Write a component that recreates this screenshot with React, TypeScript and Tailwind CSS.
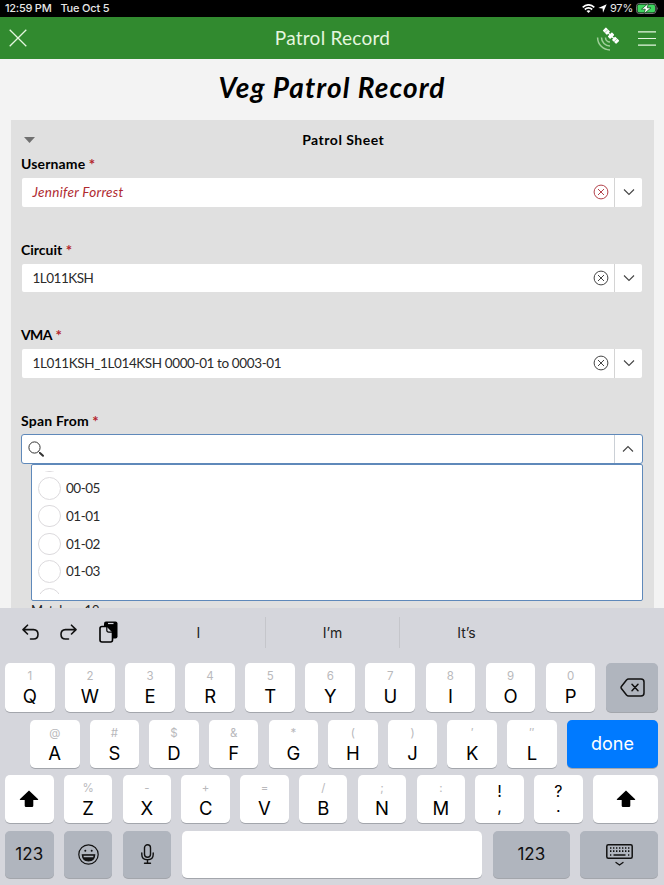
import React from "react";

const form = "font-['Lato',sans-serif]";

function ClearIcon({ color }: { color: string }) {
  return (
    <svg width="16" height="16" viewBox="0 0 16 16" fill="none" stroke={color} strokeWidth="1">
      <circle cx="8" cy="8" r="6.9" />
      <path d="M5 5l6 6M11 5l-6 6" />
    </svg>
  );
}

function Chevron({ up = false }: { up?: boolean }) {
  return (
    <svg width="12" height="8" viewBox="0 0 12 8" fill="none" stroke="#444" strokeWidth="1.1">
      <path d={up ? "M1 6.5L6 1.5L11 6.5" : "M1 1.5L6 6.5L11 1.5"} />
    </svg>
  );
}

function Label({ text, track }: { text: string; track: string }) {
  return (
    <div className="flex h-[20px] items-center pl-[10px] text-[14px] font-bold leading-[20px] text-black">
      <span className={track}>{text}</span>
      <span className="ml-[3.5px] text-[15px] font-bold text-[#b3242b]">*</span>
    </div>
  );
}

function Field({ value, track, invalid = false }: { value: string; track: string; invalid?: boolean }) {
  return (
    <div className="ml-[10.5px] mr-[11.5px] flex h-[28.5px] overflow-hidden rounded-[2px] bg-white">
      <div className="flex flex-1 items-center justify-between pl-[11px] pr-[5px]">
        <span className={`text-[13.5px] ${track} ${invalid ? "italic text-[#b02a30]" : "text-[#2b2b2b]"}`}>{value}</span>
        <ClearIcon color={invalid ? "#b3424a" : "#444"} />
      </div>
      <div className="w-px bg-[#d4d4d4]" />
      <div className="flex w-[27px] items-center justify-center">
        <Chevron />
      </div>
    </div>
  );
}

function Option({ text }: { text: string }) {
  return (
    <div className="flex h-[27.7px] shrink-0 items-center">
      <div className="h-[22.5px] w-[22.5px] rounded-full border border-[#dcdadd]" />
      <span className="ml-[5.5px] text-[13.5px] tracking-[-0.5px] text-[#2b2b2b]">{text}</span>
    </div>
  );
}

const keyBase = "flex shrink-0 rounded-[5px] shadow-[0_1px_0_#a3a6ac]";

function Key({ main, alt, size }: { main: string; alt: string; size: string }) {
  return (
    <div className={`${keyBase} ${size} flex-col items-center bg-white`}>
      <span className="mt-[5px] h-[16px] text-[11.5px] leading-[16px] text-[#b9b9bc]">{alt}</span>
      <span className="mt-[1px] text-[18.5px] leading-[23px] text-black">{main}</span>
    </div>
  );
}

function PunctKey({ top, bottom }: { top: string; bottom: string }) {
  return (
    <div className={`${keyBase} h-[47.5px] w-[48.5px] flex-col items-center bg-white text-[16px] text-black`}>
      <span className="mt-[6px] h-[20px] leading-[20px]">{top}</span>
      <span className="-mt-[2px] h-[14px] leading-[14px]">{bottom}</span>
    </div>
  );
}

function ShiftIcon() {
  return (
    <svg width="20" height="18" viewBox="0 0 20 18" fill="#000">
      <path d="M10 .4L19.2 9.2Q19.5 10 18.6 10H14.3V15.7Q14.3 17 13 17H7Q5.7 17 5.7 15.7V10H1.4Q.5 10 .8 9.2Z" />
    </svg>
  );
}

const row1 = [["Q", "1"], ["W", "2"], ["E", "3"], ["R", "4"], ["T", "5"], ["Y", "6"], ["U", "7"], ["I", "8"], ["O", "9"], ["P", "0"]];
const row2 = [["A", "@"], ["S", "#"], ["D", "$"], ["F", "&"], ["G", "*"], ["H", "("], ["J", ")"], ["K", "′"], ["L", "″"]];
const row3 = [["Z", "%"], ["X", "-"], ["C", "+"], ["V", "="], ["B", "/"], ["N", ";"], ["M", ":"]];

export default function App() {
  return (
    <div className={`flex h-[885px] w-[664px] flex-col overflow-hidden bg-[#f3f3f3] ${form}`}>
      <div className="flex h-[17px] shrink-0 items-center justify-between bg-black pl-[5px] pr-[5px] font-['Inter',sans-serif] text-[11px] font-medium text-[#e6e6e6]">
        <div className="flex">
          <span className="tracking-[-0.25px]">12:59 PM</span>
          <span className="ml-[9px] tracking-[-0.2px]">Tue Oct 5</span>
        </div>
        <div className="flex items-center">
          <svg width="13" height="9" viewBox="0 0 13 9" fill="none" stroke="#fff" strokeWidth="1.7">
            <path d="M.7 3.3Q6.5-1.600 12.300 3.300M2.800 5.500Q6.500 2.300 10.200 5.500" />
            <path d="M6.500 9L4.500 7Q6.500 5.500 8.500 7Z" fill="#fff" stroke="none" />
          </svg>
          <svg className="ml-[3px]" width="9" height="9" viewBox="0 0 9 9" fill="#fff">
            <path d="M8.700.3L5 8.700L4.600 4.500L.3 4Z" />
          </svg>
          <span className="ml-[3px] text-[11px] font-normal tracking-[-0.2px]">97%</span>
          <svg className="ml-[3px]" width="23" height="11" viewBox="0 0 23 11">
            <rect x=".5" y=".5" width="19.500" height="10" rx="2.800" fill="none" stroke="#777" />
            <rect x="1.500" y="1.500" width="17.500" height="8" rx="1.800" fill="#3fd45f" />
            <path d="M21.200 3.800Q22.800 5.500 21.200 7.200Z" fill="#777" />
            <path d="M12.500.2L5.500 6.200H9.300L8 10.800L15 4.800H11.200Z" fill="#fff" stroke="#123c1a" strokeWidth=".7" />
          </svg>
        </div>
      </div>

      <div className="flex h-[42px] shrink-0 items-center justify-between bg-[#318a2f] pl-[9px] pr-[8px] text-[#e4f6df]">
        <div className="flex w-[60px]">
          <svg width="18" height="18" viewBox="0 0 18 18" fill="none" stroke="#e4f6df" strokeWidth="1.300">
            <path d="M.7 .7L17.300 17.300M17.300 .7L.7 17.300" />
          </svg>
        </div>
        <span className="text-[19px] tracking-[0.25px]">Patrol Record</span>
        <div className="flex w-[60px] items-center justify-end">
          <svg className="overflow-visible" width="23" height="23" viewBox="0 0 23 23" fill="none">
            <g transform="translate(15 8.700) rotate(45)" fill="#fff">
              <rect x="-9.500" y="-2.300" width="6" height="4.600" rx=".6" />
              <rect x="3.500" y="-2.300" width="6" height="4.600" rx=".6" />
              <rect x="-4" y="-.6" width="8" height="1.200" />
              <rect x="-1.800" y="-3" width="3.600" height="6" rx=".8" />
              <path d="M-6.500-2.300V2.300M6.500-2.300V2.300" stroke="#318a2f" strokeWidth=".4" />
            </g>
            <g stroke="#9fcf99" strokeWidth="1.500">
              <path d="M9.500 10.500A4.500 4.500 0 0 0 14 15M5.500 10.500A8.500 8.500 0 0 0 14 19M1.600 10.500A12.400 12.400 0 0 0 14 22.900" />
            </g>
          </svg>
          <svg className="ml-[19px]" width="19" height="17" viewBox="0 0 19 17" stroke="#e4f6df" strokeWidth="1.300">
            <path d="M0 1.500H19M0 8.500H19M0 15.500H19" />
          </svg>
        </div>
      </div>

      <div className="flex h-[61px] shrink-0 items-center justify-center pb-[5px] text-[28px] font-bold italic text-black">
        <span className="tracking-[1.1px]">Veg Patrol Record</span>
      </div>

      <div className="ml-[11px] mr-[10.500px] flex h-[488px] shrink-0 flex-col overflow-hidden bg-[#e0e0e0]">
        <div className="mt-[10px] flex h-[20px] shrink-0 items-center pl-[13px] pr-[2px]">
          <svg width="11" height="6" viewBox="0 0 11 6" fill="#707070">
            <path d="M0 0H11L5.500 6Z" />
          </svg>
          <span className="flex-1 pb-[2px] text-center text-[14px] font-bold tracking-[0.5px]">Patrol Sheet</span>
        </div>
        <div className="mt-[4px] h-[85.500px] shrink-0">
          <Label text="Username" track="tracking-[0.15px]" />
          <div className="h-[4px]" />
          <Field value="Jennifer Forrest" track="tracking-[0.3px]" invalid />
        </div>
        <div className="h-[85.500px] shrink-0">
          <Label text="Circuit" track="tracking-[0px]" />
          <div className="h-[4px]" />
          <Field value="1L011KSH" track="tracking-[-0.5px]" />
        </div>
        <div className="h-[85.500px] shrink-0">
          <Label text="VMA" track="tracking-[-0.6px]" />
          <div className="h-[4px]" />
          <Field value="1L011KSH_1L014KSH 0000-01 to 0003-01" track="tracking-[-0.39px]" />
        </div>
        <Label text="Span From" track="tracking-[0.2px]" />
        <div className="ml-[10px] mr-[11px] mt-[3.500px] flex h-[30px] shrink-0 rounded-[3px] border border-[#5f89ba] bg-white">
          <div className="flex flex-1 items-center pl-[6px]">
            <svg width="17" height="17" viewBox="0 0 17 17" fill="none" stroke="#333">
              <circle cx="6.500" cy="6.500" r="5.600" strokeWidth="1" />
              <path d="M10.500 10.500L12.500 12.500" strokeWidth="1" />
              <path d="M12 12L15 14.800" strokeWidth="2" strokeLinecap="round" />
            </svg>
          </div>
          <div className="w-px bg-[#cbd0d6]" />
          <div className="flex w-[27px] items-center justify-center">
            <Chevron up />
          </div>
        </div>
        <div className="ml-[20px] mr-[10.500px] h-[137px] shrink-0 rounded-[2px] border border-[#5f89ba] bg-white pl-[6px] pt-[6px]">
          <div className="flex h-[123px] flex-col overflow-hidden">
            <div className="-mt-[24px] h-[27.700px] shrink-0">
              <Option text="" />
            </div>
            <Option text="00-05" />
            <Option text="01-01" />
            <Option text="01-02" />
            <Option text="01-03" />
            <Option text="" />
          </div>
        </div>
        <div className="ml-[20px] mt-[1px] shrink-0 text-[13px] leading-[16px] tracking-[-0.2px] text-[#222]">Matches: 19</div>
      </div>

      <div className="flex h-[277px] shrink-0 flex-col bg-[#d5d6dc] font-['Inter',sans-serif]">
        <div className="flex h-[55px] shrink-0 items-center pb-[6px] text-[14px] text-[#222]">
          <div className="flex w-[132px] items-center pl-[22px]">
            <svg width="17" height="17" viewBox="0 0 17 17" fill="none" stroke="#111" strokeWidth="1.600" strokeLinecap="round" strokeLinejoin="round">
              <path d="M5.500 1.200L1 5.600L5.500 10M1.300 5.600H11.500Q16 5.800 16 10.300Q16 15 11.500 15H8.500" />
            </svg>
            <svg className="ml-[21px]" width="17" height="17" viewBox="0 0 17 17" fill="none" stroke="#111" strokeWidth="1.600" strokeLinecap="round" strokeLinejoin="round">
              <path d="M11.500 1.200L16 5.600L11.500 10M15.700 5.600H5.500Q1 5.800 1 10.300Q1 15 5.500 15H8.500" />
            </svg>
            <svg className="-mt-[2px] ml-[22px]" width="19" height="22" viewBox="0 0 19 22">
              <rect x="5" y=".5" width="13.500" height="17" rx="2" fill="#000" />
              <path d="M9 2.500H14.500" stroke="#d5d6dc" strokeWidth="1.200" />
              <path d="M3 5.500H8.500L13.500 10.500V19Q13.500 21 11.500 21H3Q1 21 1 19V7.500Q1 5.500 3 5.500Z" fill="#d5d6dc" stroke="#000" strokeWidth="1.600" />
              <path d="M7.800 6V9.300Q7.800 11.100 9.800 11.100H13.500" fill="none" stroke="#000" strokeWidth="1.200" />
            </svg>
          </div>
          <span className="w-[133px] text-center">I</span>
          <div className="h-[31px] w-px bg-[#c5c6cb]" />
          <span className="w-[133px] text-center">I’m</span>
          <div className="h-[31px] w-px bg-[#c5c6cb]" />
          <span className="w-[133px] text-center">It’s</span>
        </div>
        <div className="flex h-[57px] shrink-0 gap-[10.400px] pl-[5px]">
          {row1.map(([m, a]) => (
            <Key key={m} main={m} alt={a} size="h-[49px] w-[49.700px]" />
          ))}
          <div className={`${keyBase} h-[49px] w-[52.500px] items-center justify-center bg-[#b0b5be]`}>
            <svg width="25" height="19" viewBox="0 0 25 19" fill="none" stroke="#111" strokeWidth="1.500" strokeLinecap="round" strokeLinejoin="round">
              <path d="M8.500 1H21Q24 1 24 4V15Q24 18 21 18H8.500Q7.500 18 6.500 17L1.400 10.500Q.7 9.500 1.400 8.500L6.500 2Q7.500 1 8.500 1Z" />
              <path d="M12 6.300L18 12.700M18 6.300L12 12.700" />
            </svg>
          </div>
        </div>
        <div className="flex h-[55px] shrink-0 gap-[10.150px] pl-[30px]">
          {row2.map(([m, a]) => (
            <Key key={m} main={m} alt={a} size="h-[47.500px] w-[49.500px]" />
          ))}
          <div className={`${keyBase} h-[47.500px] w-[91.500px] items-center justify-center bg-[#007aff] text-[18px] text-white`}>done</div>
        </div>
        <div className="flex h-[55.500px] shrink-0 gap-[10.300px] pl-[5px]">
          <div className={`${keyBase} h-[47.500px] w-[48.500px] items-center justify-center bg-white`}>
            <ShiftIcon />
          </div>
          {row3.map(([m, a]) => (
            <Key key={m} main={m} alt={a} size="h-[47.500px] w-[48.500px]" />
          ))}
          <PunctKey top="!" bottom="," />
          <PunctKey top="?" bottom="." />
          <div className={`${keyBase} h-[47.500px] w-[65.500px] items-center justify-center bg-white`}>
            <ShiftIcon />
          </div>
        </div>
        <div className="flex h-[54px] shrink-0 gap-[10.400px] pl-[5px] text-[17px] text-[#111]">
          <div className={`${keyBase} h-[47.500px] w-[48.500px] items-center justify-center bg-[#b0b5be]`}>123</div>
          <div className={`${keyBase} h-[47.500px] w-[48.500px] items-center justify-center bg-[#b0b5be]`}>
            <svg width="21" height="21" viewBox="0 0 21 21" fill="none" stroke="#111" strokeWidth="1.200">
              <circle cx="10.500" cy="10.500" r="9.700" />
              <path d="M4.300 10.800H16.700Q16.300 17 10.500 17Q4.700 17 4.300 10.800Z" fill="#111" />
              <path d="M5.500 11.800H15.500L15.200 13.300H5.800Z" fill="#b0b5be" stroke="none" />
              <circle cx="7.300" cy="6.700" r="1" fill="#111" stroke="none" />
              <circle cx="13.700" cy="6.700" r="1" fill="#111" stroke="none" />
            </svg>
          </div>
          <div className={`${keyBase} h-[47.500px] w-[48.500px] items-center justify-center bg-[#b0b5be]`}>
            <svg width="13" height="20" viewBox="0 0 13 20" fill="none" stroke="#111" strokeWidth="1.400" strokeLinecap="round">
              <rect x="3.500" y=".8" width="6" height="12.500" rx="3" />
              <path d="M.8 9V10.500Q.8 15.700 6.500 15.700Q12.200 15.700 12.200 10.500V9M6.500 15.700V19M3.500 19.200H9.500" />
            </svg>
          </div>
          <div className={`${keyBase} h-[47.500px] w-[300.500px] bg-white`} />
          <div className={`${keyBase} h-[47.500px] w-[77.500px] items-center justify-center bg-[#b0b5be]`}>123</div>
          <div className={`${keyBase} h-[47.500px] w-[77.500px] items-center justify-center bg-[#b0b5be]`}>
            <svg className="mt-[2px]" width="27" height="22" viewBox="0 0 27 22" fill="none" stroke="#111" strokeWidth="1.500" strokeLinecap="round" strokeLinejoin="round">
              <rect x=".8" y=".8" width="25.400" height="13.400" rx="1.500" />
              <path d="M4 4H23.500M4 7.200H23.500" strokeDasharray="1.400 1.600" strokeLinecap="butt" strokeWidth="1.700" />
              <path d="M4 11H5.300M7.500 11H19.500M22 11H23.300" strokeLinecap="butt" strokeWidth="1.700" />
              <path d="M10 18.500L13.500 21L17 18.500" strokeWidth="1.300" />
            </svg>
          </div>
        </div>
      </div>
    </div>
  );
}
